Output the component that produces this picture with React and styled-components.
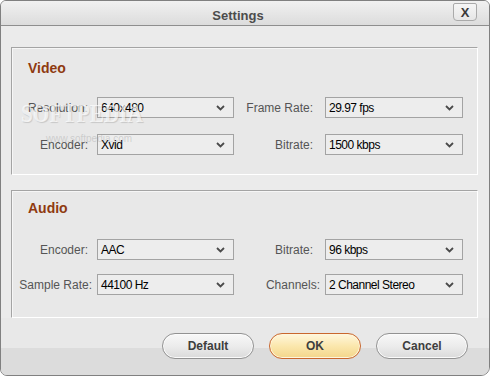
import React from "react";
import styled, { createGlobalStyle } from "styled-components";

const Global = createGlobalStyle`
  html, body { margin: 0; padding: 0; background: #ffffff; }
  body { font-family: "Liberation Sans", Arial, sans-serif; }
`;

const Window = styled.div`
  position: relative;
  width: 490px;
  height: 376px;
  box-sizing: border-box;
  border: 1px solid #808080;
  border-radius: 6px 6px 9px 7px;
  background: #ebebeb;
  display: flex;
  flex-direction: column;
  overflow: hidden;
`;

const TitleBar = styled.div`
  height: 25px;
  box-sizing: border-box;
  border-bottom: 1px solid #8e8e8e;
  background: linear-gradient(#f1f1f1, #dcdcdc);
  display: flex;
  align-items: flex-start;
`;

const Title = styled.div`
  flex: 1;
  padding: 3px 0 0 22px;
  height: 21px;
  line-height: 24px;
  text-align: center;
  font-size: 13px;
  font-weight: bold;
  color: #4c4c4c;
`;

const CloseButton = styled.div`
  width: 24px;
  height: 18px;
  box-sizing: border-box;
  margin: 2px 12px 0 0;
  border: 1px solid #aaaaaa;
  border-radius: 2px 2px 4px 4px;
  background: linear-gradient(#f6f6f6, #e6e6e6);
  display: flex;
  align-items: center;
  justify-content: center;
  font-size: 13px;
  font-weight: bold;
  color: #3a3a3a;
`;

const Content = styled.div`
  padding: 21px 11px 0 10px;
  display: flex;
  flex-direction: column;
  gap: 15px;
`;

const Panel = styled.section`
  height: 128px;
  box-sizing: border-box;
  border-style: solid;
  border-width: 1px;
  border-color: #a4a4a4 #ffffff #ffffff #a4a4a4;
  box-shadow: inset 1px 1px 0 #f6f6f6;
  background: #e8e8e8;
  padding-top: ${(p) => p.$padTop}px;
  display: flex;
  flex-direction: column;
`;

const PanelTitle = styled.h2`
  margin: 0 0 ${(p) => p.$gap}px 16px;
  height: 16px;
  line-height: 16px;
  font-size: 14px;
  font-weight: bold;
  color: #8f3a10;
`;

const Rows = styled.div`
  display: flex;
  flex-direction: column;
  gap: ${(p) => p.$gap}px;
`;

const Row = styled.div`
  display: grid;
  grid-template-columns: 85px 137px 91px 138px;
  align-items: center;
`;

const Label = styled.label`
  text-align: right;
  padding-right: ${(p) => p.$pad}px;
  font-size: 12px;
  color: #555555;
  white-space: nowrap;
`;

const Select = styled.div`
  height: 21px;
  box-sizing: border-box;
  border: 1px solid #a3a3a3;
  background: #ededed;
  display: flex;
  align-items: center;
  padding: 0 8px 0 3px;
  font-size: 12px;
  letter-spacing: -0.5px;
  color: #000000;
`;

const Value = styled.span`
  flex: 1;
  white-space: nowrap;
`;

const Footer = styled.div`
  flex: 1;
  display: flex;
  justify-content: flex-end;
  align-items: flex-start;
  gap: 15px;
  padding: 15px 21px 0 0;
  background: linear-gradient(#e8e8e8 0, #e8e8e8 30px, #dcdcdc 30px);
`;

const Button = styled.button`
  width: 92px;
  height: 26px;
  box-sizing: border-box;
  border-radius: 13px;
  border: 1px solid ${(p) => (p.$primary ? "#c9672e" : "#929292")};
  box-shadow: inset 0 0 0 1px ${(p) => (p.$primary ? "#fff6dc" : "#fbfbfb")};
  background: ${(p) =>
    p.$primary
      ? "linear-gradient(#fff7dd, #fbe7ad 50%, #f3d58a)"
      : "linear-gradient(#f8f8f8, #ececec 50%, #dadada)"};
  font-family: "Liberation Sans", Arial, sans-serif;
  font-size: 12px;
  font-weight: bold;
  color: #3e3e3e;
  padding: 0;
`;

const Watermark = styled.div`
  position: absolute;
  left: ${(p) => p.$x}px;
  top: ${(p) => p.$y}px;
  transform-origin: left top;
  transform: ${(p) => (p.$big ? "scaleX(0.82)" : "none")};
  font-family: ${(p) => (p.$big ? '"Liberation Serif", serif' : '"Liberation Sans", sans-serif')};
  font-size: ${(p) => (p.$big ? 26 : 10)}px;
  line-height: 1;
  font-weight: ${(p) => (p.$big ? "bold" : "normal")};
  color: ${(p) => (p.$big ? "rgba(255, 255, 255, 0.7)" : "rgba(150, 150, 150, 0.35)")};
  text-shadow: ${(p) => (p.$big ? "1px 1px 1px rgba(0, 0, 0, 0.14)" : "none")};
  pointer-events: none;
`;

const Chevron = () => (
  <svg width="9" height="6" viewBox="0 0 9 6">
    <path d="M1 1 L4.5 4.5 L8 1" fill="none" stroke="#4a4a4a" strokeWidth="1.8" />
  </svg>
);

const Field = ({ value }) => (
  <Select>
    <Value>{value}</Value>
    <Chevron />
  </Select>
);

const FieldRow = ({ l1, v1, l2, v2, p1 = 9, p2 = 12 }) => (
  <Row>
    <Label $pad={p1}>{l1}</Label>
    <Field value={v1} />
    <Label $pad={p2}>{l2}</Label>
    <Field value={v2} />
  </Row>
);

export default function App() {
  return (
    <>
      <Global />
      <Window>
        <TitleBar>
          <Title>Settings</Title>
          <CloseButton>X</CloseButton>
        </TitleBar>
        <Content>
          <Panel $padTop={12}>
            <PanelTitle $gap={21}>Video</PanelTitle>
            <Rows $gap={16}>
              <FieldRow l1="Resolution:" v1="640x480" l2="Frame Rate:" v2="29.97 fps" />
              <FieldRow l1="Encoder:" v1="Xvid" l2="Bitrate:" v2="1500 kbps" />
            </Rows>
          </Panel>
          <Panel $padTop={9}>
            <PanelTitle $gap={23}>Audio</PanelTitle>
            <Rows $gap={14}>
              <FieldRow l1="Encoder:" v1="AAC" l2="Bitrate:" v2="96 kbps" />
              <FieldRow l1="Sample Rate:" v1="44100 Hz" p1={5} l2="Channels:" v2="2 Channel Stereo" p2={5} />
            </Rows>
          </Panel>
        </Content>
        <Footer>
          <Button>Default</Button>
          <Button $primary>OK</Button>
          <Button>Cancel</Button>
        </Footer>
        <Watermark $big $x={20} $y={100}>SOFTPEDIA</Watermark>
        <Watermark $x={45} $y={133}>www.softpedia.com</Watermark>
      </Window>
    </>
  );
}
